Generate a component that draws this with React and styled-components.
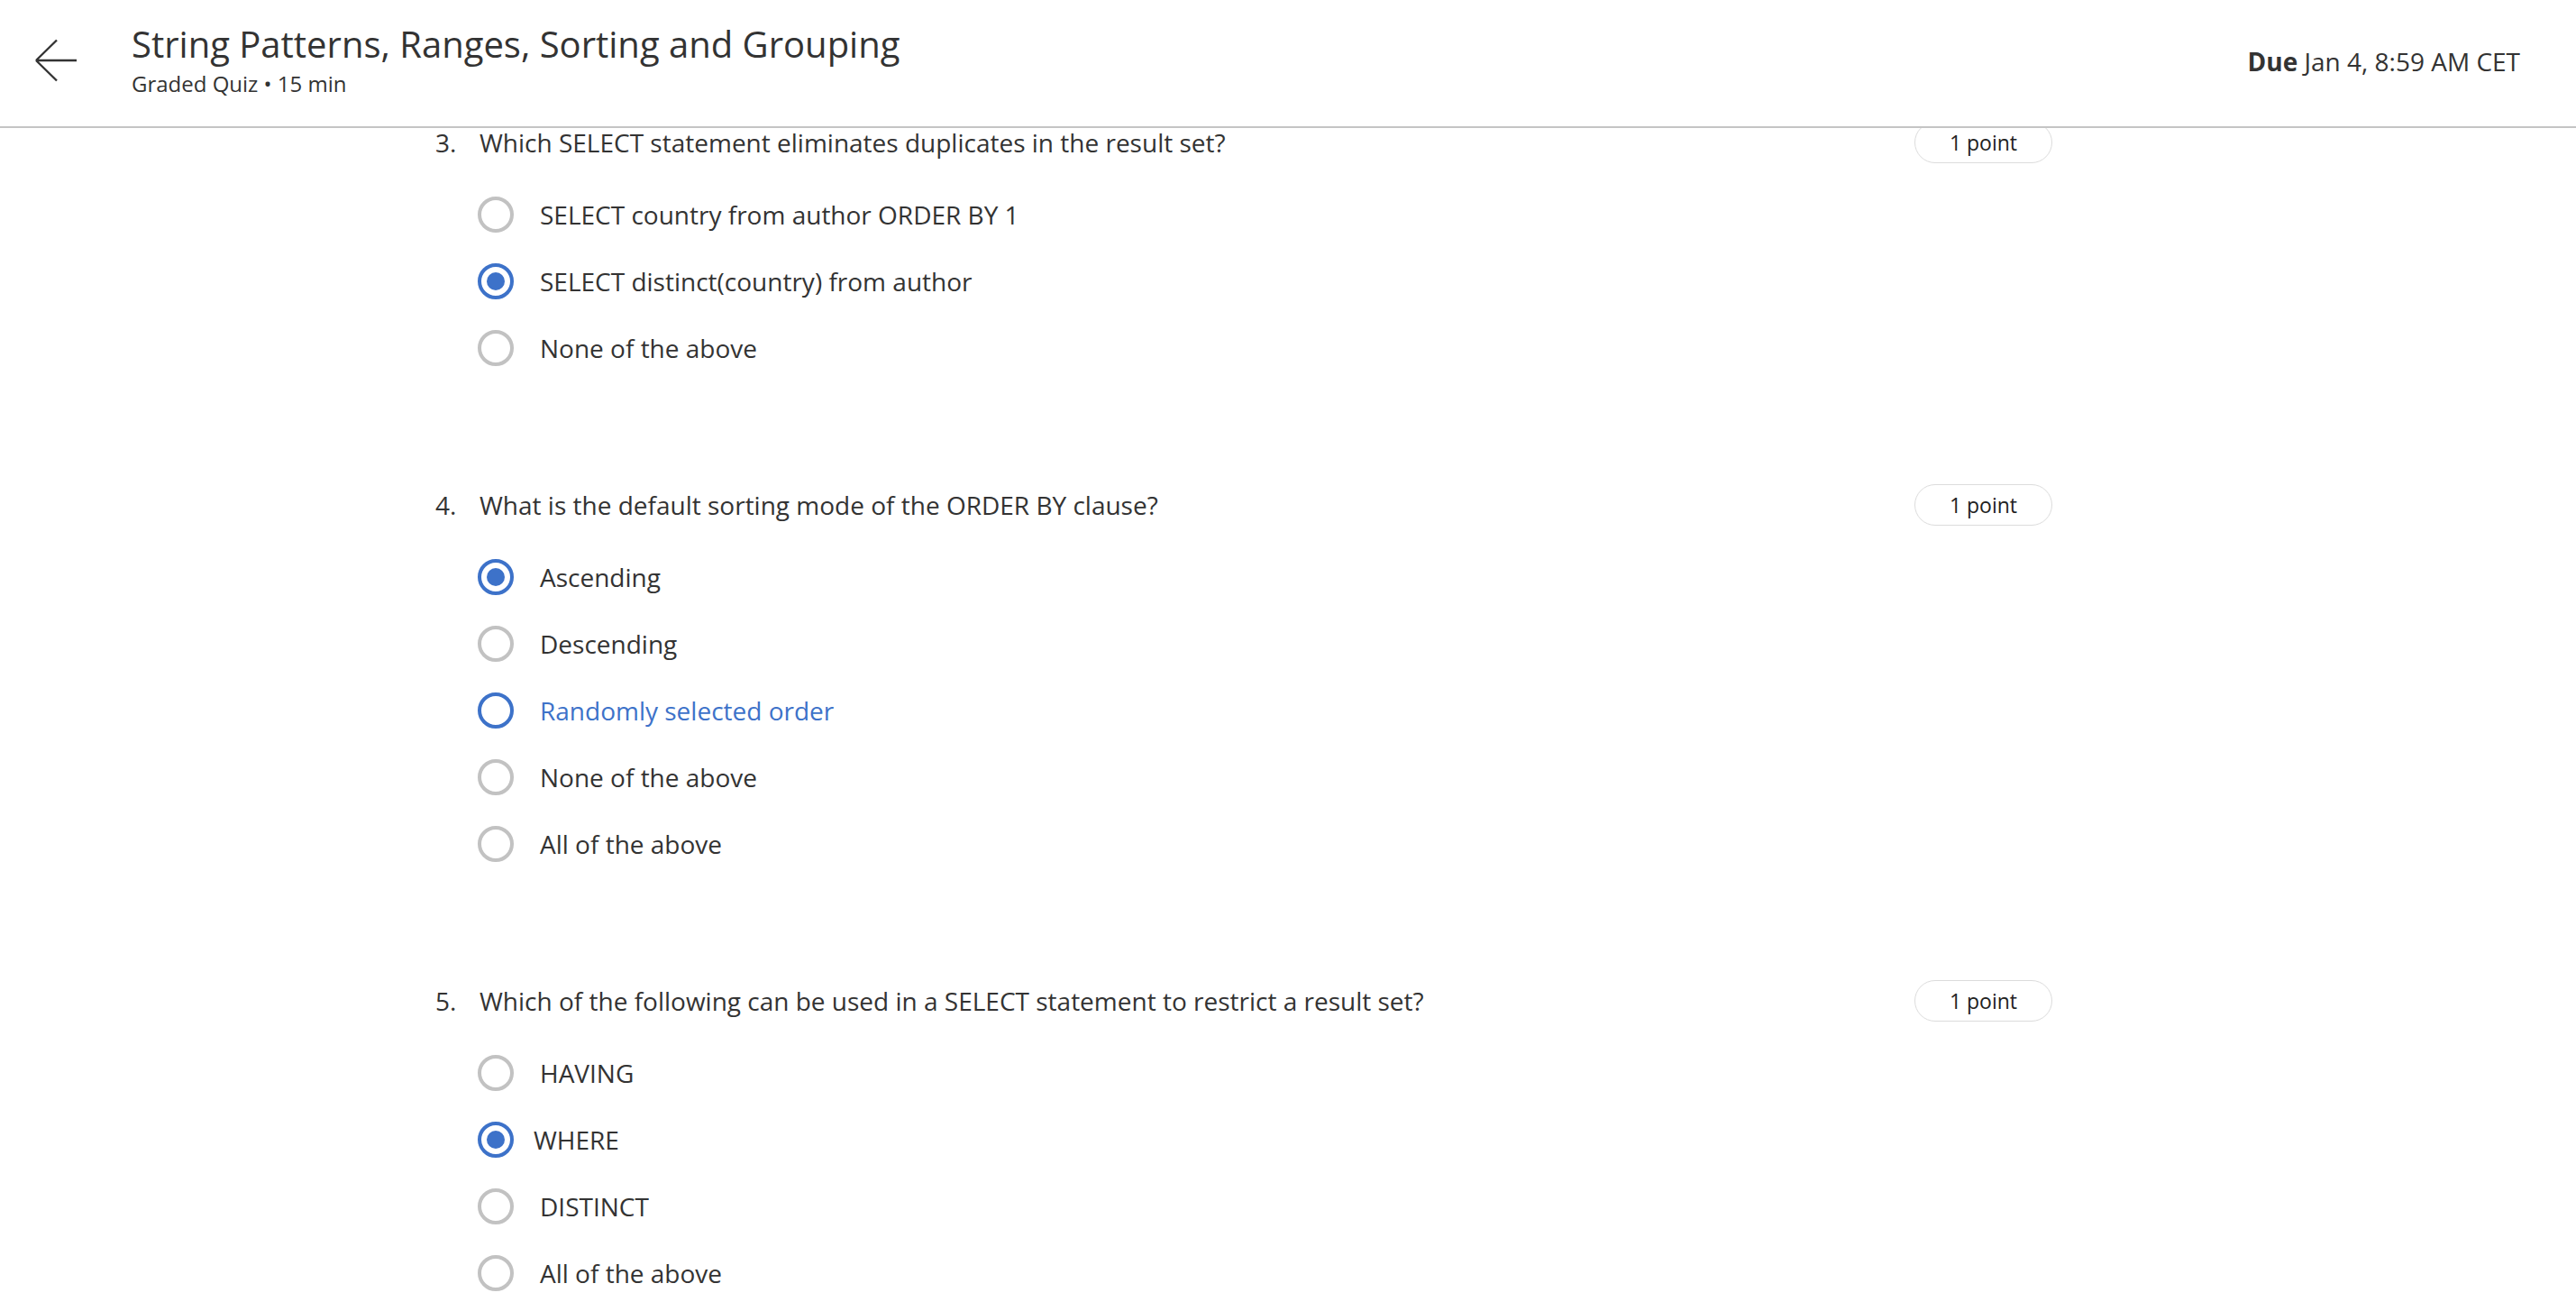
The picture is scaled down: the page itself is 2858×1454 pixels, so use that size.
import React from 'react';
import styled, { createGlobalStyle } from 'styled-components';

const GlobalStyle = createGlobalStyle`
  body {
    margin: 0;
    background: #fff;
    font-family: "Open Sans", "Liberation Sans", sans-serif;
    color: #333;
  }
`;

// ─── Header ──────────────────────────────────────────────────────────────────

const Header = styled.header`
  position: relative;
  z-index: 2;
  height: 140px;
  display: flex;
  align-items: center;
  padding: 0 62px 0 36px;
  background: #fff;
  border-bottom: 2px solid #c4c4c4;
`;

const BackBtn = styled.button`
  width: 52px;
  height: 52px;
  padding: 0;
  border: none;
  background: transparent;
  display: flex;
  align-items: center;
  justify-content: center;
  cursor: pointer;
  margin-right: 58px;
  margin-top: -2px;
`;

const TitleBlock = styled.div`
  flex: 1;
  display: flex;
  flex-direction: column;
  margin-top: -7px;
`;

const Title = styled.h1`
  margin: 0;
  font-size: 40px;
  font-weight: 400;
  line-height: 48px;
  color: #333;
`;

const Subtitle = styled.div`
  margin-top: 5px;
  font-size: 24px;
  line-height: 30px;
  color: #333;
`;

const Due = styled.div`
  font-size: 28px;
  color: #333;
  margin-top: -4px;
  b { font-weight: 700; }
`;

// ─── Quiz ────────────────────────────────────────────────────────────────────

const QuizList = styled.main`
  position: relative;
  z-index: 1;
  width: 1794px;
  margin-top: -8px;
  padding-left: 483px;
  display: flex;
  flex-direction: column;
  gap: 113px;
`;

const Question = styled.section`
  display: flex;
  flex-direction: column;
`;

const QuestionHead = styled.div`
  display: flex;
  align-items: center;
  height: 47px;
`;

const Number = styled.span`
  width: 49px;
  font-size: 28px;
  color: #333;
`;

const Prompt = styled.span`
  flex: 1;
  font-size: 28px;
  color: #333;
`;

const Points = styled.span`
  width: 151px;
  height: 44px;
  border: 1.5px solid #dcdcdc;
  border-radius: 24px;
  display: flex;
  align-items: center;
  justify-content: center;
  font-size: 23px;
  color: #222;
`;

const Options = styled.div`
  display: flex;
  flex-direction: column;
  margin-top: 20px;
  padding-left: 47px;
`;

const Option = styled.label`
  display: flex;
  align-items: center;
  height: 74px;
  cursor: pointer;
`;

const Radio = styled.span`
  box-sizing: border-box;
  width: 40px;
  height: 40px;
  border-radius: 50%;
  border: 4px solid ${({ $state }) => ($state === 'idle' ? '#c2c2c2' : '#3d72c9')};
  display: flex;
  align-items: center;
  justify-content: center;
  flex-shrink: 0;
  &::after {
    content: '';
    width: 20px;
    height: 20px;
    border-radius: 50%;
    background: #3d72c9;
    display: ${({ $state }) => ($state === 'checked' ? 'block' : 'none')};
  }
`;

const OptionText = styled.span`
  margin-left: ${({ $tight }) => ($tight ? '22px' : '29px')};
  font-size: 28px;
  color: ${({ $hover }) => ($hover ? '#3d72c9' : '#333')};
`;

// ─── Dados ───────────────────────────────────────────────────────────────────

const questions = [
  {
    n: 3,
    text: 'Which SELECT statement eliminates duplicates in the result set?',
    options: [
      { label: 'SELECT country from author ORDER BY 1' },
      { label: 'SELECT distinct(country) from author', state: 'checked' },
      { label: 'None of the above' },
    ],
  },
  {
    n: 4,
    text: 'What is the default sorting mode of the ORDER BY clause?',
    options: [
      { label: 'Ascending', state: 'checked' },
      { label: 'Descending' },
      { label: 'Randomly selected order', state: 'hover' },
      { label: 'None of the above' },
      { label: 'All of the above' },
    ],
  },
  {
    n: 5,
    text: 'Which of the following can be used in a SELECT statement to restrict a result set?',
    options: [
      { label: 'HAVING' },
      { label: 'WHERE', state: 'checked', tight: true },
      { label: 'DISTINCT' },
      { label: 'All of the above' },
    ],
  },
];

export default function App() {
  return (
    <>
      <GlobalStyle />
      <Header>
        <BackBtn aria-label="Back">
          <svg width="52" height="52" viewBox="0 0 52 52" fill="none">
            <path d="M49 24H4M4 24L27 1.5M4 24L27 46.5" stroke="#333" strokeWidth="2.4" />
          </svg>
        </BackBtn>
        <TitleBlock>
          <Title>String Patterns, Ranges, Sorting and Grouping</Title>
          <Subtitle>Graded Quiz • 15 min</Subtitle>
        </TitleBlock>
        <Due><b>Due</b> Jan 4, 8:59 AM CET</Due>
      </Header>

      <QuizList>
        {questions.map(q => (
          <Question key={q.n}>
            <QuestionHead>
              <Number>{q.n}.</Number>
              <Prompt>{q.text}</Prompt>
              <Points>1 point</Points>
            </QuestionHead>
            <Options>
              {q.options.map(o => (
                <Option key={o.label}>
                  <Radio $state={o.state === 'checked' ? 'checked' : o.state === 'hover' ? 'hover' : 'idle'} />
                  <OptionText $hover={o.state === 'hover'} $tight={o.tight}>{o.label}</OptionText>
                </Option>
              ))}
            </Options>
          </Question>
        ))}
      </QuizList>
    </>
  );
}
